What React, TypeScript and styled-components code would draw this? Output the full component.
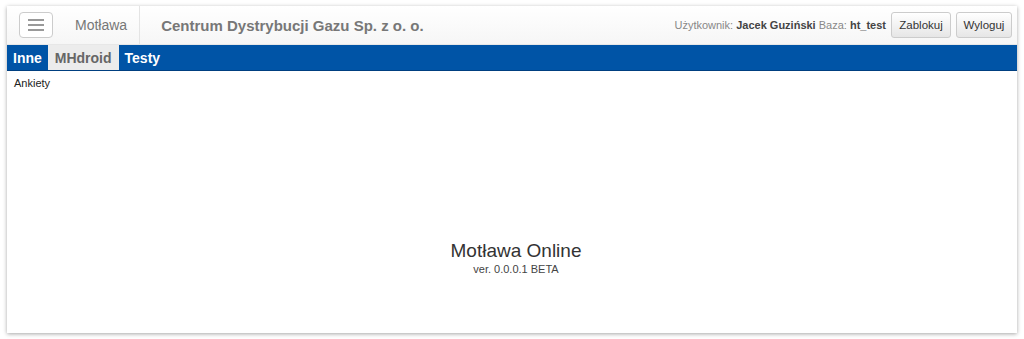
import React from 'react';
import styled, { createGlobalStyle } from 'styled-components';

const GlobalStyle = createGlobalStyle`
  html, body {
    margin: 0;
    padding: 0;
    background: #fff;
    font-family: "Liberation Sans", Arial, sans-serif;
  }
  * { box-sizing: border-box; }
`;

const Page = styled.div`
  padding: 6px 7px 6px 7px;
  height: 339px;
`;

const Frame = styled.div`
  height: 100%;
  background: #fff;
  box-shadow: 0 1px 4px rgba(0, 0, 0, 0.35);
  display: flex;
  flex-direction: column;
`;

const Navbar = styled.header`
  height: 39px;
  background: linear-gradient(to bottom, #ffffff 0, #f6f6f6 100%);
  border-bottom: 1px solid #e7e7e7;
  display: flex;
  align-items: center;
`;

const Brand = styled.div`
  display: flex;
  align-items: center;
  height: 100%;
  padding: 0 12px;
  border-right: 1px solid #e4e4e4;
`;

const Toggle = styled.button`
  width: 34px;
  height: 26px;
  border: 1px solid #ccc;
  border-radius: 4px;
  background: #fff;
  display: flex;
  flex-direction: column;
  align-items: center;
  justify-content: center;
  gap: 3px;
  padding: 0;
`;

const Bar = styled.span`
  display: block;
  width: 16px;
  height: 2px;
  background: #999;
`;

const AppName = styled.span`
  margin-left: 22px;
  font-size: 14px;
  color: #777;
`;

const Company = styled.span`
  margin-left: 21px;
  font-size: 15px;
  font-weight: bold;
  color: #777;
`;

const Right = styled.div`
  margin-left: auto;
  display: flex;
  align-items: center;
  gap: 5px;
  padding-right: 5px;
`;

const Info = styled.span`
  font-size: 11px;
  color: #888;
  margin-right: 0;
  b { color: #444; }
`;

const Btn = styled.button<{ $w: number }>`
  width: ${p => p.$w}px;
  height: 26px;
  padding: 0;
  font-family: inherit;
  font-size: 11.5px;
  color: #333;
  border: 1px solid #ccc;
  border-radius: 3px;
  background: linear-gradient(to bottom, #ffffff 0, #e6e6e6 100%);
`;

const Tabs = styled.nav`
  height: 26px;
  background: #0054a6;
  display: flex;
  border-bottom: 1px solid #003f80;
`;

const Tab = styled.div<{ $active?: boolean }>`
  display: flex;
  align-items: center;
  padding: 0 ${p => (p.$active ? 7 : 6)}px;
  font-size: 14px;
  font-weight: bold;
  color: ${p => (p.$active ? '#666' : '#fff')};
  background: ${p => (p.$active ? '#ececec' : 'transparent')};
`;

const Content = styled.main`
  flex: 1;
  display: flex;
  flex-direction: column;
  padding: 6px 7px;
`;

const SubLink = styled.div`
  font-size: 11px;
  color: #222;
`;

const Splash = styled.div`
  margin-top: 151px;
  padding-left: 8px;
  text-align: center;
  color: #333;
`;

const Title = styled.div`
  font-size: 19px;
  line-height: 22px;
`;

const Version = styled.div`
  font-size: 11px;
  line-height: 14px;
  color: #444;
`;

export default function App() {
  return (
    <>
      <GlobalStyle />
      <Page>
        <Frame>
          <Navbar>
            <Brand>
              <Toggle>
                <Bar />
                <Bar />
                <Bar />
              </Toggle>
              <AppName>Motława</AppName>
            </Brand>
            <Company>Centrum Dystrybucji Gazu Sp. z o. o.</Company>
            <Right>
              <Info>
                Użytkownik: <b>Jacek Guziński</b> Baza: <b>ht_test</b>
              </Info>
              <Btn $w={60}>Zablokuj</Btn>
              <Btn $w={56}>Wyloguj</Btn>
            </Right>
          </Navbar>
          <Tabs>
            <Tab>Inne</Tab>
            <Tab $active>MHdroid</Tab>
            <Tab>Testy</Tab>
          </Tabs>
          <Content>
            <SubLink>Ankiety</SubLink>
            <Splash>
              <Title>Motława Online</Title>
              <Version>ver. 0.0.0.1 BETA</Version>
            </Splash>
          </Content>
        </Frame>
      </Page>
    </>
  );
}
